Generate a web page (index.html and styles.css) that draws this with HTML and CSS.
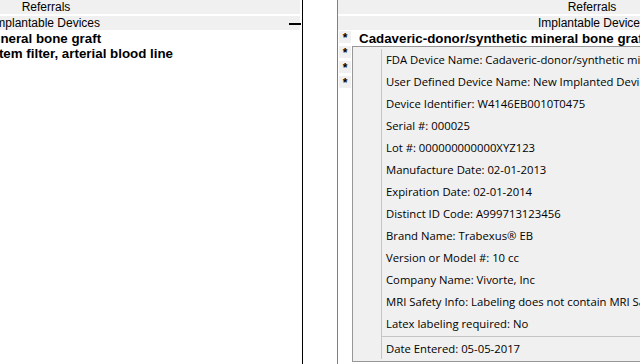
FILE: index.html
```html
<!DOCTYPE html>
<html>
<head>
<meta charset="utf-8">
<link rel="stylesheet" href="styles.css">
</head>
<body>
<div class="screen">
  <div class="pane pane-left">
    <div class="pane-inner inner-left">
      <div class="hdr">Referrals</div>
      <div class="hdr hdr-sub">Implantable Devices<span class="collapse"></span></div>
      <div class="row"><span class="star">*</span><span class="name">Cadaveric-donor/synthetic mineral bone graft</span></div>
      <div class="row"><span class="star">*</span><span class="name">Cardiopulmonary bypass system filter, arterial blood line</span></div>
    </div>
  </div>
  <div class="divider"></div>
  <div class="pane pane-right">
    <div class="pane-inner">
      <div class="hdr">Referrals</div>
      <div class="hdr hdr-sub">Implantable Devices</div>
      <div class="row"><span class="star">*</span><span class="name">Cadaveric-donor/synthetic mineral bone graft</span></div>
      <div class="row"><span class="star">*</span><span class="name">Cardiopulmonary bypass system filter, arterial blood line</span></div>
      <div class="row"><span class="star">*</span><span class="name">Implanted device</span></div>
      <div class="row"><span class="star">*</span><span class="name">Implanted device</span></div>
    </div>
  </div>
</div>
<div class="menu">
  <div class="item">FDA Device Name: Cadaveric-donor/synthetic mineral bone graft</div>
  <div class="item">User Defined Device Name: New Implanted Device</div>
  <div class="item">Device Identifier: W4146EB0010T0475</div>
  <div class="item">Serial #: 000025</div>
  <div class="item">Lot #: 000000000000XYZ123</div>
  <div class="item">Manufacture Date: 02-01-2013</div>
  <div class="item">Expiration Date: 02-01-2014</div>
  <div class="item">Distinct ID Code: A999713123456</div>
  <div class="item">Brand Name: Trabexus® EB</div>
  <div class="item">Version or Model #: 10 cc</div>
  <div class="item">Company Name: Vivorte, Inc</div>
  <div class="item">MRI Safety Info: Labeling does not contain MRI Safety Information</div>
  <div class="item">Latex labeling required: No</div>
  <div class="sep"></div>
  <div class="item">Date Entered: 05-05-2017</div>
</div>
</body>
</html>
```
FILE: styles.css
```css
html, body {
  margin: 0;
  padding: 0;
  overflow: hidden;
  background: #ffffff;
}
body {
  width: 640px;
  height: 364px;
  position: relative;
  font-family: "Liberation Sans", Arial, sans-serif;
  color: #000;
}
.screen {
  display: flex;
  height: 364px;
}
.pane {
  overflow: hidden;
  height: 364px;
}
.pane-left {
  width: 302px;
  flex: none;
  border-right: 1px solid #000;
}
.divider {
  width: 34px;
  flex: none;
}
.pane-right {
  flex: 1;
  border-left: 1px solid #808080;
}
.pane-inner {
  width: 508px;
}
.inner-left {
  margin-left: -208px;
  position: relative;
}
.hdr {
  height: 14px;
  line-height: 15px;
  background: #f0f0f0;
  text-align: center;
  font-size: 12px;
  white-space: nowrap;
}
.hdr-sub {
  margin-top: 2px;
  position: relative;
}
.collapse {
  position: absolute;
  right: -1px;
  top: 7px;
  width: 12px;
  height: 2px;
  background: #000;
}
.row {
  display: flex;
  align-items: flex-start;
  height: 14px;
  padding-top: 1px;
  white-space: nowrap;
}
.star {
  flex: none;
  width: 12px;
  height: 12px;
  margin-left: 1px;
  background: #f0f0f0;
  font-weight: bold;
  font-size: 12px;
  line-height: 14px;
  text-align: center;
}
.name {
  margin-left: 8px;
  font-weight: bold;
  font-size: 13.33px;
  line-height: 14px;
  margin-top: 1px;
}
.menu {
  position: absolute;
  left: 352px;
  top: 46px;
  width: 340px;
  height: 316px;
  box-sizing: border-box;
  padding: 2px;
  background: #f0f0f0;
  border: 1px solid #979797;
  font-family: "Open Sans", "Noto Sans", sans-serif;
  font-size: 11.3px;
  color: #000;
}
.menu::before {
  content: "";
  position: absolute;
  left: 28px;
  top: 2px;
  bottom: 2px;
  width: 1px;
  background: #c5c5c5;
}
.item {
  height: 22px;
  line-height: 22px;
  padding-left: 31px;
  white-space: nowrap;
}
.sep {
  height: 1px;
  margin: 1px 0 1px 27px;
  background: #c5c5c5;
}
```
